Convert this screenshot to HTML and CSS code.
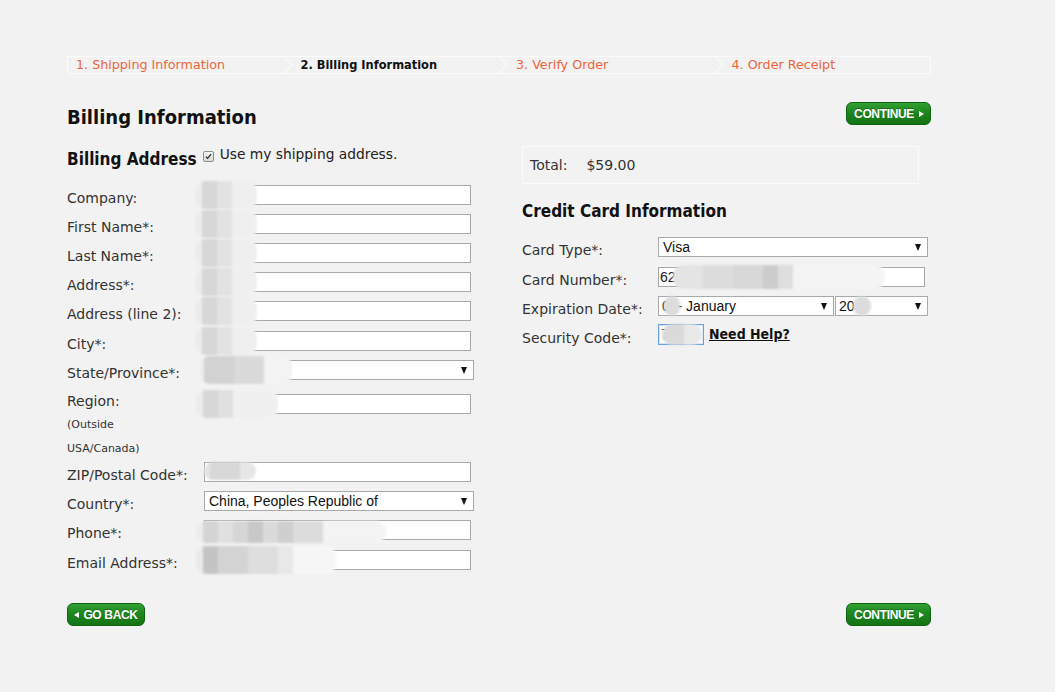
FILE: index.html
```html
<!DOCTYPE html>
<html>
<head>
<meta charset="utf-8">
<title>Billing Information</title>
<link rel="stylesheet" href="styles.css">
</head>
<body>
<div class="page">
  <ol class="steps">
    <li class="step">1. Shipping Information</li>
    <li class="step active"><svg class="chev" viewBox="0 0 10 18" width="10" height="18"><polyline points="0,0 9,9 0,18"/></svg>2. Billing Information</li>
    <li class="step"><svg class="chev" viewBox="0 0 10 18" width="10" height="18"><polyline points="0,0 9,9 0,18"/></svg>3. Verify Order</li>
    <li class="step"><svg class="chev" viewBox="0 0 10 18" width="10" height="18"><polyline points="0,0 9,9 0,18"/></svg>4. Order Receipt</li>
  </ol>

  <div class="title-row">
    <h1>Billing Information</h1>
    <a class="btn btn-next">CONTINUE<span class="tri-r"></span></a>
  </div>

  <div class="columns">
    <section class="col-left">
      <div class="addr-head">
        <h2>Billing Address</h2>
        <label class="use-ship">
          <span class="cb"><svg viewBox="0 0 11 11" width="11" height="11"><path d="M2.3 5.6 L4.4 7.8 L8.7 2.6"/></svg></span>
          <span class="use-text">Use my shipping address.</span>
        </label>
      </div>

      <div class="row"><span class="lbl">Company:</span><div class="ctl"><span class="input"></span><span class="blur b1"></span></div></div>
      <div class="row"><span class="lbl">First Name*:</span><div class="ctl"><span class="input"></span><span class="blur b1"></span></div></div>
      <div class="row"><span class="lbl">Last Name*:</span><div class="ctl"><span class="input"></span><span class="blur b1"></span></div></div>
      <div class="row"><span class="lbl">Address*:</span><div class="ctl"><span class="input"></span><span class="blur b1"></span></div></div>
      <div class="row tall"><span class="lbl">Address (line 2):</span><div class="ctl"><span class="input"></span><span class="blur b1"></span></div></div>
      <div class="row"><span class="lbl">City*:</span><div class="ctl"><span class="input"></span><span class="blur b1"></span></div></div>
      <div class="row state"><span class="lbl">State/Province*:</span><div class="ctl"><span class="select"></span><span class="blur b-state"></span></div></div>
      <div class="row region">
        <span class="lbl">Region:<br><small>(Outside<br>USA/Canada)</small></span>
        <div class="ctl"><span class="input"></span><span class="blur b-region"></span></div>
      </div>
      <div class="row"><span class="lbl">ZIP/Postal Code*:</span><div class="ctl"><span class="input"></span><span class="blur b-zip"></span></div></div>
      <div class="row"><span class="lbl">Country*:</span><div class="ctl"><span class="select">China, Peoples Republic of</span></div></div>
      <div class="row tall"><span class="lbl">Phone*:</span><div class="ctl"><span class="input">+86</span><span class="blur b-phone"></span></div></div>
      <div class="row"><span class="lbl">Email Address*:</span><div class="ctl"><span class="input"></span><span class="blur b-email"></span></div></div>
    </section>

    <section class="col-right">
      <div class="total-box"><span class="total-lbl">Total:</span><span>$59.00</span></div>
      <h2 class="cc-title">Credit Card Information</h2>
      <div class="crow r1"><span class="lbl">Card Type*:</span><div class="ctl"><span class="select">Visa</span></div></div>
      <div class="crow r2"><span class="lbl">Card Number*:</span><div class="ctl"><span class="input num">62</span><span class="blur b-card"></span></div></div>
      <div class="crow r3"><span class="lbl">Expiration Date*:</span>
        <div class="ctl exp">
          <span class="select month">0&nbsp;&nbsp;- January</span><span class="select year">20</span>
          <span class="blur b-month"></span><span class="blur b-year"></span>
        </div>
      </div>
      <div class="crow r4"><span class="lbl">Security Code*:</span>
        <div class="ctl sec"><span class="input cvv">7</span><span class="blur b-cvv"></span><a class="help">Need Help?</a></div>
      </div>
    </section>
  </div>

  <div class="bottom">
    <a class="btn btn-back"><span class="tri-l"></span>GO BACK</a>
    <a class="btn btn-next">CONTINUE<span class="tri-r"></span></a>
  </div>
</div>
</body>
</html>
```

FILE: styles.css
```css
body {
  margin: 0;
  background: #f2f2f2;
  font-family: "DejaVu Sans", Verdana, sans-serif;
  color: #333;
}

.page {
  width: 864px;
  margin-left: 67px;
  padding-top: 56px;
}

/* progress steps */
.steps {
  display: flex;
  list-style: none;
  margin: 0;
  padding: 0;
  height: 16px;
  border: 1px solid #fbfbfb;
}
.step {
  flex: 0 0 25%;
  box-sizing: border-box;
  min-width: 0;
  position: relative;
  padding-left: 17px;
  font-size: 12.7px;
  line-height: 16px;
  color: #f0643a;
  white-space: nowrap;
}
.step:first-child { padding-left: 8px; }
.step.active {
  color: #111;
  font-family: "DejaVu Sans Condensed", "DejaVu Sans", sans-serif;
  font-stretch: condensed;
  font-weight: bold;
}
.chev {
  position: absolute;
  left: -1px;
  top: -1px;
}
.chev polyline {
  fill: none;
  stroke: #fdfdfd;
  stroke-width: 1;
}

/* title */
.title-row {
  display: flex;
  justify-content: space-between;
  align-items: flex-start;
  margin-top: 28px;
}
h1, h2 {
  margin: 0;
  color: #111;
  font-family: "DejaVu Sans Condensed", "DejaVu Sans", sans-serif;
  font-stretch: condensed;
  font-weight: bold;
}
h1 {
  font-size: 20px;
  line-height: 24px;
  padding-top: 3px;
}
h2 {
  font-size: 17px;
  line-height: 20px;
}

/* buttons */
.btn {
  display: inline-flex;
  align-items: center;
  justify-content: center;
  box-sizing: border-box;
  height: 23px;
  border: 1px solid #0f6410;
  border-radius: 6px;
  background: linear-gradient(#33a033, #1d861d 45%, #147314);
  color: #fff;
  font-family: "Liberation Sans", Arial, sans-serif;
  font-weight: bold;
  font-size: 12px;
  letter-spacing: -0.35px;
  text-shadow: 0 -1px 0 rgba(0,0,0,0.25);
  cursor: pointer;
}
.btn-next { width: 85px; padding-left: 1px; }
.btn-back { width: 78px; }
.tri-r {
  width: 0; height: 0;
  margin-left: 5px;
  border-left: 5px solid #fff;
  border-top: 3.5px solid transparent;
  border-bottom: 3.5px solid transparent;
}
.tri-l {
  width: 0; height: 0;
  margin-right: 4px;
  border-right: 5px solid #fff;
  border-top: 3.5px solid transparent;
  border-bottom: 3.5px solid transparent;
}

/* columns */
.columns {
  display: flex;
  justify-content: space-between;
  margin-top: 17px;
}
.col-left { width: 407px; }
.col-right { width: 409px; }

.addr-head {
  display: flex;
  align-items: flex-start;
  height: 39px;
}
.addr-head h2 { padding-top: 3px; }
.use-ship {
  display: flex;
  align-items: flex-start;
  margin-left: 6px;
}
.cb {
  display: block;
  width: 11px;
  height: 11px;
  margin-top: 5px;
  margin-right: 6px;
}
.cb svg {
  display: block;
  box-sizing: border-box;
  border: 1px solid #8e8e8e;
  border-radius: 2px;
  background: linear-gradient(#fafafa, #d9d9d9);
}
.cb path {
  fill: none;
  stroke: #2a2a2a;
  stroke-width: 1.6;
}
.use-text {
  font-size: 13.8px;
  line-height: 17px;
  color: #222;
}

/* form rows */
.row {
  display: grid;
  grid-template-columns: 137px 1fr;
  height: 29px;
}
.row.tall { height: 30px; }
.row.state { height: 34px; }
.row.region { height: 68px; }
.lbl {
  font-size: 14px;
  line-height: 18px;
  padding-top: 4px;
  color: #333;
  white-space: nowrap;
}
.region .lbl {
  line-height: 22px;
  padding-top: 0;
  margin-top: -4px;
}
.region small {
  font-size: 11px;
}
.ctl {
  position: relative;
}
.input {
  display: block;
  box-sizing: border-box;
  width: 267px;
  height: 20px;
  border: 1px solid #a9a9a9;
  background: #fff;
  font-family: "Liberation Sans", Arial, sans-serif;
  font-size: 14px;
  line-height: 18px;
  padding-left: 2px;
  color: #222;
  overflow: hidden;
}
.select {
  display: block;
  position: relative;
  box-sizing: border-box;
  width: 270px;
  height: 20px;
  border: 1px solid #a9a9a9;
  background: #fff;
  font-family: "Liberation Sans", Arial, sans-serif;
  font-size: 14px;
  line-height: 18px;
  padding-left: 4px;
  color: #111;
  white-space: nowrap;
}
.select::after {
  content: "";
  position: absolute;
  right: 6px;
  top: 6px;
  border-top: 7px solid #111;
  border-left: 3.5px solid transparent;
  border-right: 3.5px solid transparent;
}

/* right column */
.total-box {
  display: flex;
  align-items: center;
  box-sizing: border-box;
  width: 397px;
  height: 38px;
  border: 1px solid #fbfbfb;
  padding-left: 7px;
  font-size: 14px;
  color: #333;
}
.total-lbl { margin-right: 19px; }
.cc-title {
  margin-top: 17px;
  margin-bottom: 16px;
}
.crow {
  display: grid;
  grid-template-columns: 136px 1fr;
  height: 29px;
}
.crow.r1 { height: 30px; }
.crow.r3 { height: 28px; }
.crow.r4 .lbl { padding-top: 5px; }
.input.num { padding-left: 1px; }
.exp {
  display: flex;
  gap: 1px;
}
.select.month { width: 176px; padding-left: 3px; }
.select.year { width: 93px; padding-left: 3px; }
.sec {
  display: flex;
  align-items: flex-start;
}
.input.cvv {
  width: 46px;
  height: 21px;
  border: 1px solid #6f9fe0;
  box-shadow: inset 0 0 0 1px #d3e3f8;
}
.help {
  margin-left: 5px;
  margin-top: 1px;
  font-family: "DejaVu Sans Condensed", "DejaVu Sans", sans-serif;
  font-stretch: condensed;
  font-weight: bold;
  font-size: 14px;
  line-height: 18px;
  color: #111;
  text-decoration: underline;
}

/* privacy blur overlays */
.blur {
  position: absolute;
  top: -4px;
  height: 28px;
  border-radius: 10px;
  filter: blur(1.2px);
  pointer-events: none;
}
.b1 {
  left: -9px;
  width: 62px;
  background: linear-gradient(90deg, #ececec 0 7px, #d7d7d7 7px 22px, #e2e2e2 22px 37px, #efefef 37px);
}
.b-state {
  left: -4px;
  width: 92px;
  background: linear-gradient(90deg, #ececec 0 4px, #d2d2d2 4px 34px, #dadada 34px 64px, #f3f3f3 64px);
}
.b-region {
  left: -8px;
  width: 82px;
  background: linear-gradient(90deg, #ececec 0 7px, #d7d7d7 7px 22px, #e0e0e0 22px 37px, #f0f0f0 37px);
}
.b-zip {
  left: 0;
  top: 0;
  height: 18px;
  width: 52px;
  background: linear-gradient(90deg, #e4e4e4 0 6px, #d8d8d8 6px 36px, #e6e6e6 36px);
}
.b-phone {
  left: -8px;
  top: 1px;
  height: 22px;
  width: 190px;
  background: linear-gradient(90deg, #ececec 0 7px, #d4d4d4 7px 22px, #e0e0e0 22px 37px, #d6d6d6 37px 52px, #c8c8c8 52px 67px, #dadada 67px 82px, #cfcfcf 82px 97px, #dcdcdc 97px 127px, #f3f3f3 127px);
}
.b-email {
  left: -8px;
  width: 140px;
  background: linear-gradient(90deg, #eaeaea 0 7px, #c4c4c4 7px 22px, #d4d4d4 22px 52px, #dedede 52px 82px, #e8e8e8 82px 97px, #f6f6f6 97px);
}
.b-card {
  left: 15px;
  top: -2px;
  height: 24px;
  width: 212px;
  background: linear-gradient(90deg, #e4e4e4 0 30px, #dcdcdc 30px 60px, #d8d8d8 60px 90px, #cccccc 90px 105px, #dedede 105px 120px, #f4f4f4 120px);
}
.b-month {
  left: 6px;
  top: 0;
  height: 20px;
  width: 16px;
  background: #dcdcdc;
}
.b-year {
  left: 195px;
  top: 0;
  height: 20px;
  width: 18px;
  background: #dcdcdc;
}
.b-cvv {
  left: 4px;
  top: 0;
  height: 21px;
  width: 40px;
  background: linear-gradient(90deg, #dadada 0 22px, #e8e8e8 22px);
}

/* bottom */
.bottom {
  display: flex;
  justify-content: space-between;
  margin-top: 24px;
}
```
